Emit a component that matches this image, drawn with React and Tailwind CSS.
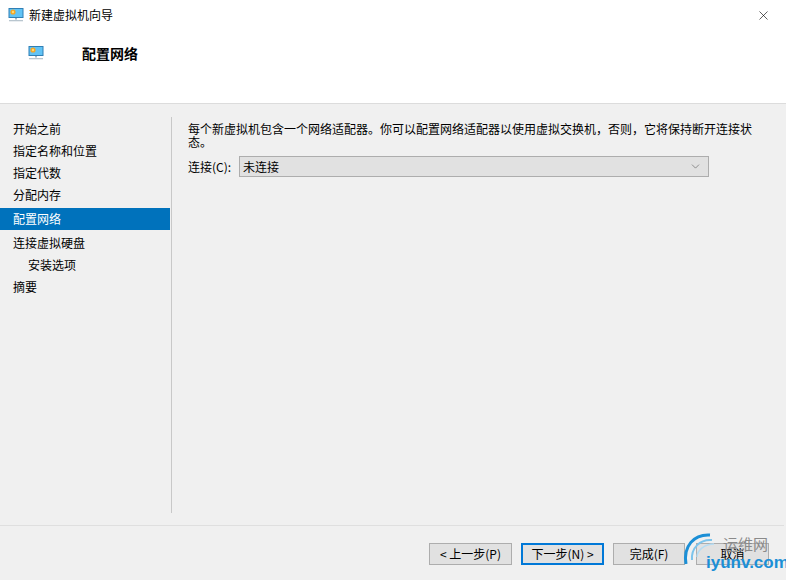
import { X, ChevronDown } from "lucide-react";

const CJK = "font-['Noto_Sans_CJK_SC','Liberation_Sans',sans-serif]";

const steps = [
  { label: "开始之前" },
  { label: "指定名称和位置" },
  { label: "指定代数" },
  { label: "分配内存" },
  { label: "配置网络", active: true },
  { label: "连接虚拟硬盘" },
  { label: "安装选项", sub: true },
  { label: "摘要" },
];

function Monitor({ className }) {
  return (
    <svg viewBox="0 0 16 16" className={className}>
      <rect x="0.5" y="1" width="15" height="10" fill="#2f7fb5" />
      <rect x="1.5" y="2" width="13" height="8" fill="#62c3f5" />
      <circle cx="5" cy="5" r="2.6" fill="#f5a623" />
      <circle cx="5" cy="5" r="1.2" fill="#ffd970" />
      <rect x="7" y="11" width="2" height="1.5" fill="#9fb4c2" />
      <rect x="1" y="13" width="14" height="1.3" fill="#b9c6cf" />
    </svg>
  );
}

function WizardButton({ children, primary, width }) {
  return (
    <button
      className={`${width} h-[22px] bg-[#e1e1e1] text-[12px] leading-none text-black flex items-center justify-center ${
        primary ? "border-2 border-[#0078d7]" : "border border-[#adadad]"
      }`}
    >
      {children}
    </button>
  );
}

export default function App() {
  return (
    <div className={`w-[786px] h-[580px] relative overflow-hidden flex flex-col bg-[#f0f0f0] text-black ${CJK}`}>
      <div className="h-[104px] shrink-0 bg-white border-b border-[#dcdcdc] flex flex-col">
        <div className="h-[30px] flex items-center pl-[8px] pr-[15px]">
          <Monitor className="w-[16px] h-[16px]" />
          <span className="ml-[5px] text-[12px]">新建虚拟机向导</span>
          <X size={15} strokeWidth={1} className="ml-auto" />
        </div>
        <div className="flex items-center h-[46px] pl-[28px]">
          <Monitor className="w-[16px] h-[16px]" />
          <span className="ml-[38px] text-[14px] font-bold">配置网络</span>
        </div>
      </div>

      <div className="flex-1 flex pt-[13px] pb-[12px] min-h-0">
        <div className="w-[172px] shrink-0 border-r border-[#c8c8c8] flex flex-col pt-[1px]">
          {steps.map((s) => (
            <div
              key={s.label}
              className={`h-[22px] flex items-center mr-[1px] text-[12px] ${s.sub ? "pl-[28px]" : "pl-[13px]"} ${
                s.active ? "bg-[#0072bc] text-white h-[18px] my-[2px]" : ""
              }`}
            >
              {s.label}
            </div>
          ))}
        </div>
        <div className="flex-1 pl-[16px] pr-[17px]">
          <p className="text-[12px] leading-[13px] mt-[5px]">
            每个新虚拟机包含一个网络适配器。你可以配置网络适配器以使用虚拟交换机，否则，它将保持断开连接状态。
          </p>
          <div className="flex items-center mt-[8px] text-[12px]">
            <span className="w-[51px] shrink-0">连接(C):</span>
            <div className="w-[470px] h-[21px] bg-[#e1e1e1] border border-[#adadad] flex items-center pl-[3px] pr-[6px]">
              <span>未连接</span>
              <ChevronDown size={13} strokeWidth={1} className="ml-auto text-[#444]" />
            </div>
          </div>
        </div>
      </div>

      <div className="h-[55px] shrink-0 mr-[2px] border-t border-[#dfdfdf] flex items-start justify-end pt-[17px] pr-[15px]">
        <WizardButton width="w-[83px]">&lt; 上一步(P)</WizardButton>
        <div className="ml-[9px]">
          <WizardButton primary width="w-[83px]">下一步(N) &gt;</WizardButton>
        </div>
        <div className="ml-[9px]">
          <WizardButton width="w-[72px]">完成(F)</WizardButton>
        </div>
        <div className="ml-[11px]">
          <WizardButton width="w-[73px]">取消</WizardButton>
        </div>
      </div>

      {/* watermark */}
      <div className="absolute left-[682px] top-[532px] w-[104px] h-[48px] pointer-events-none">
        <svg viewBox="0 0 50 48" className="absolute left-0 top-0 w-[50px] h-[48px]" fill="none">
          <path d="M28 3C12 2 1 14 4 32" stroke="#1b8fd6" strokeWidth="3" />
          <path d="M30 8C18 7 9 16 10 28" stroke="#7cc4ec" strokeWidth="2" />
          <path d="M32 12C23 12 15 18 15 25" stroke="#b5dcf3" strokeWidth="1.5" />
        </svg>
        <span className="absolute left-[41px] top-[3px] text-[15px] leading-[18px] text-[#8a8a8a] whitespace-nowrap">运维网</span>
        <span className="absolute left-[24px] top-[21px] text-[17px] leading-[20px] font-bold text-[#1b8fd6] whitespace-nowrap font-['Liberation_Sans',sans-serif]">iyunv.com</span>
      </div>
    </div>
  );
}
